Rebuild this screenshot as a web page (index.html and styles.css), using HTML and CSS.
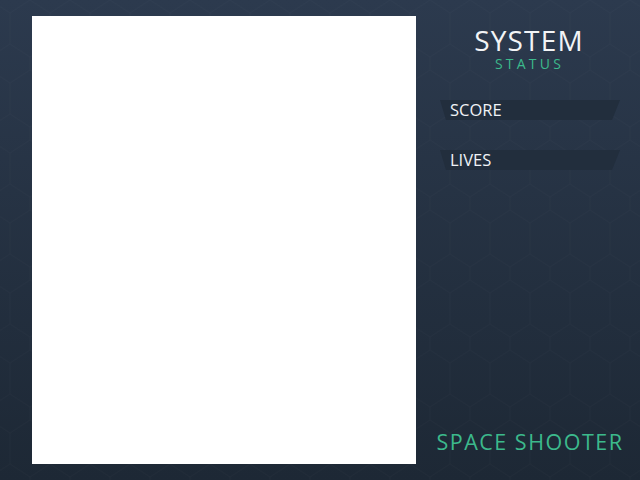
FILE: index.html
```html
<!DOCTYPE html>
<html>
<head>
<meta charset="utf-8">
<link rel="stylesheet" href="styles.css">
</head>
<body>
<div class="app">
  <div class="canvas"></div>
  <div class="panel">
    <div class="title">SYSTEM</div>
    <div class="subtitle">STATUS</div>
    <div class="stat">SCORE</div>
    <div class="stat">LIVES</div>
    <div class="brand">SPACE SHOOTER</div>
  </div>
</div>
</body>
</html>
```

FILE: styles.css
```css
html, body {
  margin: 0;
  padding: 0;
}
body {
  width: 640px;
  height: 480px;
  overflow: hidden;
  background-color: #263346;
  background-image:
    url("data:image/svg+xml;utf8,<svg xmlns='http://www.w3.org/2000/svg' width='40' height='70'><path d='M0 13 L20 0 L40 13 L40 44 L20 57 L0 44 Z M20 57 L20 70' fill='none' stroke='%23ffffff' stroke-opacity='0.015' stroke-width='1'/></svg>"),
    linear-gradient(180deg, #2c3a4e 0%, #1d2835 100%);
  background-position: 10px 0, 0 0;
  font-family: "Open Sans", "Noto Sans", sans-serif;
}
.app {
  display: flex;
  height: 480px;
  box-sizing: border-box;
  padding: 16px 0 16px 32px;
}
.canvas {
  width: 384px;
  height: 448px;
  background: #ffffff;
}
.panel {
  flex: 1;
  display: flex;
  flex-direction: column;
  align-items: center;
}
.title {
  margin-top: 9px;
  font-size: 28px;
  line-height: 30px;
  color: #f2f4f6;
  letter-spacing: 1.2px;
  padding-left: 2px;
}
.subtitle {
  margin-top: 1px;
  font-size: 14px;
  line-height: 16px;
  color: #3cb98c;
  letter-spacing: 3.2px;
  padding-left: 3px;
}
.stat {
  align-self: flex-start;
  margin-left: 24px;
  margin-top: 28px;
  width: 180px;
  height: 20px;
  box-sizing: border-box;
  padding-left: 10px;
  background: #222e3d;
  clip-path: polygon(0 0, 100% 0, calc(100% - 8px) 100%, 6px 100%);
  color: #f0f2f5;
  font-size: 16.5px;
  line-height: 20px;
}
.stat + .stat {
  margin-top: 30px;
}
.brand {
  margin-top: auto;
  margin-bottom: 9px;
  margin-left: 4px;
  font-size: 21.5px;
  line-height: 26px;
  color: #3cb98c;
  letter-spacing: 1.5px;
}
```
